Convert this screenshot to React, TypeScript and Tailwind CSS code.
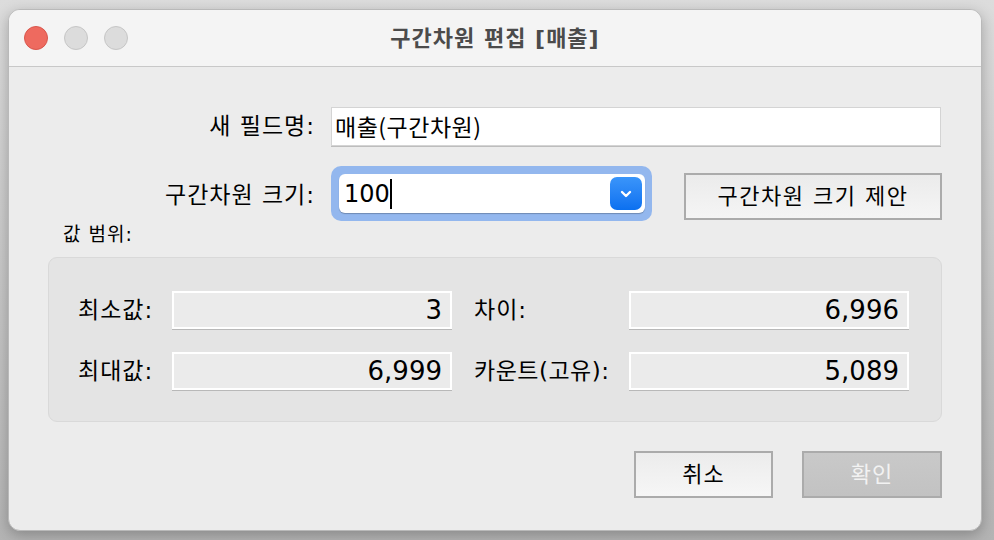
import React from "react";

const FONT = { fontFamily: '"DejaVu Sans", "Noto Sans CJK KR", sans-serif' };
const CJK = { fontFamily: '"Noto Sans CJK KR", sans-serif' };

/* ─── read-only value box ─── */
function ValueField({ value }: { value: string }) {
  return (
    <div className="w-[280px] h-[38px] flex items-center justify-end pr-[8px] bg-[#ebebeb] border-2 border-white shadow-[0_1px_0_#b8b8b8] text-[26px] text-black leading-none">
      {value}
    </div>
  );
}

export default function App() {
  return (
    <div
      className="w-[994px] h-[540px] overflow-hidden bg-gradient-to-b from-[#dcdcdc] to-[#b4b4b4] pl-[8px] pt-[9px]"
      style={FONT}
    >
      {/* Window */}
      <div className="w-[974px] h-[522px] flex flex-col rounded-[12px] overflow-hidden border border-[#b9b9b9] bg-[#ececec] shadow-[0_4px_14px_rgba(0,0,0,0.25)]">
        {/* Title bar */}
        <div className="relative h-[57px] shrink-0 flex items-center pl-[15px] gap-[16px] bg-[#f4f4f4] border-b border-[#c8c8c8]">
          <span className="size-[24px] rounded-full bg-[#ee6a5f] border border-[#d9564c]" />
          <span className="size-[24px] rounded-full bg-[#dcdcdc] border border-[#c6c6c6]" />
          <span className="size-[24px] rounded-full bg-[#dcdcdc] border border-[#c6c6c6]" />
          <div className="absolute inset-0 flex items-center justify-center pointer-events-none">
            <span className="text-[22px] font-bold text-[#4b4b4b] tracking-[1px]">구간차원 편집 [매출]</span>
          </div>
        </div>

        {/* Body */}
        <div className="flex flex-col pt-[40px] text-[23px] text-black leading-none">
          {/* New field name */}
          <div className="flex items-center">
            <div className="w-[306px] text-right tracking-[1px]">새 필드명:</div>
            <div
              className="ml-[16px] w-[610px] h-[39px] flex items-center pl-[3px] bg-white border border-[#d4d4d4] shadow-[0_1px_0_#bdbdbd] tracking-[0.5px]"
              style={CJK}
            >
              매출(구간차원)
            </div>
          </div>

          {/* Bin size */}
          <div className="flex items-start mt-[20px]">
            <div className="w-[306px] self-center text-right tracking-[1px] pt-[4px]">구간차원 크기:</div>
            <div className="ml-[16px] w-[321px] h-[55px] p-[8px] pr-[7px] rounded-[10px] bg-[#93b7ee]">
              <div className="h-full flex items-center justify-between rounded-[6px] bg-white shadow-[0_1px_1px_rgba(0,0,0,0.25)] pl-[5px] pr-[3px]">
                <div className="flex items-center text-[24px]">
                  100<span className="w-[2px] h-[30px] bg-black" />
                </div>
                <div className="w-[32px] h-[33px] rounded-[7px] bg-gradient-to-b from-[#3a95fa] to-[#0a70f0] flex items-center justify-center">
                  <svg width="14" height="10" viewBox="0 0 14 10" fill="none">
                    <path d="M3 3l4 4 4-4" stroke="white" strokeWidth="2.4" strokeLinecap="round" strokeLinejoin="round" />
                  </svg>
                </div>
              </div>
            </div>
            <button
              type="button"
              className="ml-[32px] mt-[7px] w-[258px] h-[47px] border-2 border-[#ababab] bg-gradient-to-b from-[#ebebeb] to-[#f5f5f5] text-[22px] text-black leading-none tracking-[1.5px]"
            >
              구간차원 크기 제안
            </button>
          </div>

          {/* Range label */}
          <div className="pl-[54px] mt-[4px] text-[19px] tracking-[1px]">값 범위:</div>

          {/* Range group */}
          <div className="ml-[39px] mt-[13px] w-[894px] h-[165px] rounded-[9px] bg-[#e4e4e4] border border-[#d9d9d9] pl-[29px] pt-[33px] flex flex-col gap-[23px]">
            <div className="flex items-center">
              <div className="w-[94px] tracking-[1px]">최소값:</div>
              <ValueField value="3" />
              <div className="ml-[22px] w-[155px] tracking-[1px]">차이:</div>
              <ValueField value="6,996" />
            </div>
            <div className="flex items-center">
              <div className="w-[94px] tracking-[1px]">최대값:</div>
              <ValueField value="6,999" />
              <div className="ml-[22px] w-[155px] tracking-[0.5px]">카운트(고유):</div>
              <ValueField value="5,089" />
            </div>
          </div>

          {/* Actions */}
          <div className="flex justify-end gap-[29px] mt-[29px] pr-[39px]">
            <button
              type="button"
              className="w-[139px] h-[47px] border-2 border-[#ababab] bg-gradient-to-b from-[#ececec] to-[#f6f6f6] text-[22px] text-black leading-none tracking-[1px]"
            >
              취소
            </button>
            <button
              type="button"
              className="w-[140px] h-[47px] border-2 border-[#ababab] bg-gradient-to-b from-[#c9c9c9] to-[#c2c2c2] text-[22px] text-[#f2f2f2] leading-none tracking-[1px]"
            >
              확인
            </button>
          </div>
        </div>
      </div>
    </div>
  );
}
